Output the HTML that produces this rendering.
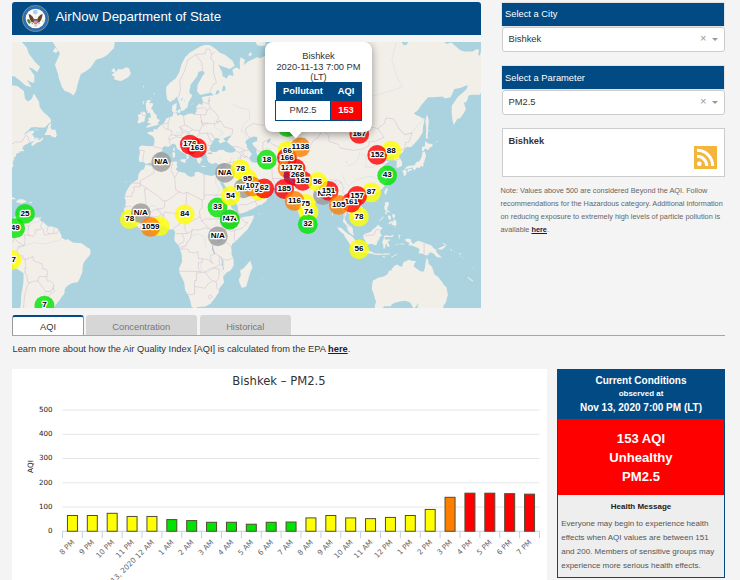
<!DOCTYPE html>
<html lang="en">
<head>
<meta charset="utf-8">
<title>AirNow Department of State</title>
<style>
*{box-sizing:border-box;margin:0;padding:0}
html,body{width:740px;height:580px;overflow:hidden}
body{background:#f4f4f4;font-family:"Liberation Sans",Arial,sans-serif;color:#333;position:relative}
.abs{position:absolute}
#hdr{left:12px;top:2px;width:469px;height:33px;background:#024a84;border-radius:3px 3px 0 0}
#hdr .ttl{position:absolute;left:43.5px;top:0;height:33px;line-height:29.5px;font-size:13.3px;color:#fff;white-space:nowrap}
#seal{position:absolute;left:10px;top:2.9px;width:27px;height:27px}
#map{left:12px;top:42px;width:469px;height:266px;background:#aad3df;overflow:hidden}
#map svg{position:absolute;left:0;top:0}
#pop{position:absolute;left:253px;top:-0.5px;width:107px;height:90px;background:#fff;border-radius:8px;box-shadow:0 2px 9px rgba(0,0,0,.4)}
#pop .tipc{position:absolute;left:17px;top:90px;width:28px;height:14px;overflow:hidden}
#pop .tip{position:absolute;left:8.3px;top:-6.5px;width:11.4px;height:11.4px;background:#fff;transform:rotate(45deg);box-shadow:0 2px 9px rgba(0,0,0,.4)}
#pop .pc{position:absolute;left:0;top:9.8px;width:107px;text-align:center;font-size:9.3px;line-height:10.3px;color:#333;background:#fff}
#pop table{position:absolute;left:10px;top:40.5px;width:87px;border-collapse:collapse;font-size:9.3px;background:#fff}
#pop th{background:#024a84;color:#fff;font-weight:bold;height:18.5px;padding:0 0 1px 0;text-align:center}
#pop td{border:1px solid #024a84;height:20px;padding:0 0 1.5px 0;text-align:center;color:#333}
#pop td.r{background:#ff0000;color:#fff;font-weight:bold}
.ph{left:501.7px;width:222.6px;height:23.1px;box-shadow:0 0 0 0.7px #ddd;background:#024a84;color:#fff;font-size:9.35px;line-height:21.5px;padding-left:3.3px;white-space:nowrap}
.sel{left:501.5px;width:223px;height:24.5px;background:#fff;border:1px solid #ccc;border-radius:3px;font-size:9.35px;line-height:22px;padding-left:6px;color:#333}
.sel .x{position:absolute;right:17px;top:-1px;font-size:11px;color:#999}
.sel .ar{position:absolute;right:6px;top:10px;width:0;height:0;border-left:3px solid transparent;border-right:3px solid transparent;border-top:3px solid #999}
#city{left:501.5px;top:128px;width:223px;height:48.5px;background:#fff;border:1px solid #ccc}
#city b{position:absolute;left:6px;top:5px;font-size:9.3px;line-height:14px;color:#333}
#rss{position:absolute;left:191px;top:16.5px;width:23px;height:23px}
#note{left:500.5px;top:184px;width:226px;font-size:7.34px;line-height:13px;color:#666;white-space:nowrap}
#note b{color:#1b1b3a;text-decoration:underline}
.tab{top:314.5px;height:21px;font-size:9.3px;line-height:24.5px;text-align:center;border-radius:3px 3px 0 0}
.tab.off{background:#d6d6d6;color:#777}
#t1{left:12px;width:72px;background:#fff;border:1px solid #999;border-top:2px solid #024a84;color:#333;line-height:20.6px;border-bottom:none}
#tline{left:12px;top:335px;width:712.8px;height:1px;background:#a6a6a6}
#learn{left:12.5px;top:343px;font-size:9.31px;line-height:12px;white-space:nowrap;color:#333}
#learn b{text-decoration:underline;color:#1b1b3a}
#chart{left:12px;top:369px;width:535px;height:211px;background:#fff;overflow:hidden}
#cc{left:557px;top:369px;width:168px;height:209px;background:#eee;border:1px solid #024a84;border-top:none}
#cc .top{position:absolute;left:-1px;top:0;width:168px;height:49.5px;background:#024a84;color:#fff;text-align:center;font-weight:bold}
#cc .red{position:absolute;left:0;top:49.5px;width:166px;height:76.5px;background:#ff0000;color:#fff;text-align:center;font-weight:bold;font-size:13.1px;line-height:18.9px;padding-top:11.5px}
#cc .hm{position:absolute;left:0;top:126px;width:166px;text-align:center;font-weight:bold;font-size:8px;line-height:12px;color:#222;padding-top:6px}
#cc .tx{position:absolute;left:3.2px;top:148.4px;font-size:8px;line-height:14px;color:#555;white-space:nowrap}
</style>
</head>
<body>
<div id="hdr" class="abs">
<svg id="seal" viewBox="0 0 27 27"><circle cx="13.5" cy="13.5" r="13.1" fill="#2f6db4" stroke="#c9c064" stroke-width="0.55"/><circle cx="13.5" cy="13.5" r="9.8" fill="#fbfbf8"/><circle cx="13.3" cy="7.1" r="2.4" fill="#a9d3e6"/><path d="M6.6 9.100 L8.600 9.700 L10.700 11.700 L11.900 14.100 L11.600 17 L9.800 17.300 L8.050 14.700 L7.200 12Z M20.650 9.100 L18.600 9.700 L16.500 11.700 L15.400 14.100 L15.700 17 L17.400 17.300 L19.200 14.700 L20.100 12Z M11.900 14.100 L15.400 14.100 L16 17.600 L13.600 19.400 L11.300 17.600Z" fill="#6a4423"/><path d="M9.6 18 L10.800 18.900 M17.600 18 L16.400 18.900" stroke="#6a4423" stroke-width="0.8"/><circle cx="13.6" cy="12.3" r="1.15" fill="#f4f2ea"/><ellipse cx="6.9" cy="16.3" rx="1.4" ry="2.5" transform="rotate(-30 6.900 16.300)" fill="#3f8c3f"/><path d="M19.8 15.400 L21.600 17.300 M20.600 15 L21.900 16.600" stroke="#b5b5b5" stroke-width="0.5"/><path d="M11.6 19.300 L15.700 19.300 L15.100 21.700 L12.150 21.700Z" fill="#d3d3d0"/><path d="M11.75 14.200 H15.500 V17 Q15.500 18.500 13.620 18.700 Q11.750 18.500 11.750 17Z" fill="#f28a8a"/><rect x="11.75" y="14.2" width="3.75" height="1.4" fill="#2c5fb3"/></svg>
<div class="ttl">AirNow Department of State</div>
</div>

<div id="map" class="abs">
<svg width="469" height="266" viewBox="0 0 469 266">
<rect width="469" height="266" fill="#aad3df"/>
<g filter="url(#bl)">
<path fill="#f2efe9" d="M133.5 123.0 L134.6 122.8 L140.9 124.6 L146.6 121.4 L150.4 120.7 L158.0 120.2 L163.3 119.5 L165.5 120.2 L164.6 122.5 L165.5 124.9 L163.7 127.2 L165.5 129.0 L168.4 129.9 L173.1 131.0 L175.0 133.3 L178.8 135.0 L182.6 133.9 L182.6 130.6 L186.4 129.7 L192.1 132.4 L199.7 134.1 L203.5 132.8 L205.9 133.5 L209.5 133.3 L210.9 137.2 L209.5 140.9 L207.6 139.2 L206.3 136.3 L206.7 138.3 L208.8 142.2 L212.0 148.9 L215.2 155.1 L215.4 159.1 L217.7 161.1 L219.6 166.0 L222.4 168.0 L225.7 171.3 L226.8 173.3 L226.6 174.0 L228.1 176.0 L233.8 174.6 L237.6 174.2 L242.0 173.3 L241.6 176.0 L239.5 180.6 L235.7 187.3 L231.9 191.1 L226.2 196.7 L223.4 199.6 L220.5 201.5 L219.0 205.3 L219.6 209.1 L219.6 212.9 L221.5 216.8 L221.7 223.6 L218.6 228.5 L214.7 230.5 L211.1 234.5 L212.0 240.6 L207.3 246.5 L206.9 250.1 L203.5 255.3 L198.7 261.5 L193.4 264.4 L186.4 264.9 L182.6 266.3 L179.6 265.1 L178.8 261.0 L176.9 254.4 L173.1 248.2 L172.2 240.4 L167.4 230.5 L167.1 226.5 L170.1 219.7 L169.7 212.6 L168.0 207.2 L167.1 204.3 L162.3 198.6 L162.5 195.0 L163.1 191.1 L162.7 188.4 L160.8 187.3 L158.0 187.6 L156.1 187.6 L153.2 183.8 L147.0 184.2 L144.3 185.4 L140.9 186.7 L137.1 185.9 L130.5 187.4 L127.6 186.3 L124.2 183.8 L121.0 181.5 L119.7 179.6 L118.7 177.7 L116.2 174.8 L113.0 172.1 L112.8 170.0 L111.5 167.6 L113.4 165.1 L113.8 159.1 L112.5 155.1 L114.3 149.5 L117.2 144.5 L120.0 141.1 L123.8 138.7 L126.1 137.2 L126.3 132.8 L128.6 128.8 L131.8 127.2Z M238.2 218.7 L240.5 225.6 L238.6 229.5 L234.2 244.6 L230.0 246.0 L227.6 241.3 L226.8 237.6 L228.9 233.5 L228.1 228.5 L231.9 226.0 L235.7 221.6Z M127.6 120.2 L126.7 116.1 L128.0 110.4 L127.1 105.3 L129.5 103.5 L135.2 104.0 L141.3 104.3 L142.4 100.8 L142.4 96.8 L140.5 94.0 L135.8 91.8 L135.6 90.3 L139.0 89.5 L141.7 89.8 L141.3 86.9 L144.9 87.5 L147.7 83.9 L151.3 81.8 L153.2 79.0 L154.2 76.2 L158.0 75.3 L160.8 74.0 L161.2 70.7 L160.0 68.4 L160.2 63.6 L164.6 61.1 L164.6 65.3 L163.7 68.7 L165.2 72.7 L165.5 73.7 L168.4 72.4 L171.6 74.0 L176.0 72.0 L179.8 71.4 L182.2 72.4 L184.5 69.7 L184.5 64.3 L187.4 61.5 L190.2 63.3 L191.0 59.0 L189.3 55.7 L192.1 54.6 L197.8 53.8 L202.0 53.1 L198.7 50.8 L192.1 52.0 L188.3 53.1 L185.1 49.6 L185.5 42.9 L191.1 33.0 L192.9 31.2 L190.6 28.5 L186.4 29.9 L185.1 34.3 L178.8 42.4 L177.3 48.9 L177.3 50.4 L180.3 53.5 L179.2 55.7 L176.2 60.8 L175.6 65.0 L171.8 68.4 L169.2 69.1 L168.8 66.7 L167.1 60.8 L165.5 56.4 L164.8 54.6 L162.7 57.2 L158.0 60.1 L155.1 57.2 L154.2 50.8 L154.2 44.9 L158.0 40.8 L163.7 36.5 L167.4 29.9 L169.3 22.8 L173.1 15.3 L177.9 10.5 L182.6 7.8 L188.3 4.4 L193.6 2.7 L197.8 3.3 L203.5 6.7 L207.3 10.5 L213.0 12.7 L220.5 18.8 L222.8 23.8 L217.7 27.1 L210.1 24.2 L206.3 22.8 L210.1 29.9 L210.7 34.3 L214.9 36.5 L216.7 33.0 L221.5 33.9 L220.5 27.6 L224.3 25.2 L228.1 27.6 L227.7 20.3 L228.5 15.3 L232.9 17.8 L231.9 23.3 L235.7 19.8 L245.2 15.3 L248.0 16.3 L254.7 13.2 L259.4 8.4 L266.1 11.1 L269.8 12.7 L274.6 16.3 L275.5 12.7 L271.7 9.4 L271.4 1.6 L272.7 -4.4 L281.2 -10.7 L282.2 -1.4 L284.1 12.7 L285.0 -1.4 L288.8 -5.6 L296.4 -10.7 L307.8 -17.4 L334.3 -40.2 L357.1 -32.1 L359.0 -16.0 L372.2 -12.0 L385.5 -10.7 L389.3 -0.2 L391.2 2.7 L394.1 3.3 L396.9 -0.8 L402.6 -2.0 L408.3 -1.4 L410.2 -7.5 L419.7 -7.5 L429.1 -2.0 L434.8 2.1 L439.2 0.4 L447.7 7.8 L451.9 9.4 L460.8 9.4 L464.2 7.2 L467.1 7.8 L466.1 12.7 L468.0 13.7 L469.0 8.4 L472.7 8.4 L478.4 12.7 L478.4 43.7 L470.9 48.9 L467.6 52.7 L459.5 52.7 L456.6 53.5 L454.4 60.1 L451.9 60.8 L453.8 67.0 L451.9 71.1 L448.1 76.2 L445.4 76.8 L441.8 83.0 L440.5 78.4 L439.6 70.4 L439.9 63.6 L442.4 60.1 L446.2 54.6 L450.9 50.8 L454.7 46.9 L455.7 42.9 L448.1 46.1 L442.4 46.9 L438.6 55.3 L432.9 56.4 L430.7 54.6 L421.5 55.3 L415.9 55.3 L410.2 61.9 L405.4 68.7 L401.6 71.4 L405.4 73.7 L407.3 74.3 L410.2 76.2 L412.6 76.5 L412.1 80.0 L411.1 84.5 L410.7 90.3 L407.3 96.0 L402.6 101.4 L398.8 105.3 L395.0 104.8 L392.5 107.1 L390.6 110.4 L387.4 112.9 L386.5 114.6 L388.2 116.6 L390.1 120.2 L390.1 123.7 L386.5 125.6 L384.4 126.0 L384.6 122.5 L384.8 119.0 L382.1 118.3 L382.3 114.1 L380.6 112.9 L376.0 115.4 L375.1 111.7 L376.0 111.2 L374.1 110.9 L371.3 113.4 L368.5 114.9 L367.9 116.6 L370.0 119.0 L371.3 119.9 L374.1 118.8 L377.0 119.2 L374.1 121.4 L372.8 122.5 L370.9 124.9 L372.8 127.2 L374.0 129.9 L375.8 132.4 L375.7 134.1 L374.0 135.5 L376.0 136.3 L375.1 139.8 L373.6 140.7 L371.9 144.7 L370.3 146.4 L368.8 147.9 L366.0 150.3 L361.4 152.0 L359.9 152.6 L356.1 154.0 L354.2 154.6 L353.7 156.5 L352.9 154.2 L350.4 153.6 L347.6 155.1 L345.3 158.5 L346.6 161.5 L348.5 163.7 L350.1 165.1 L351.8 169.0 L352.0 172.3 L351.4 173.8 L348.0 176.0 L347.0 177.7 L343.8 179.4 L343.4 177.1 L342.9 176.0 L341.0 175.6 L339.6 173.5 L338.5 172.5 L336.2 171.5 L336.0 170.2 L335.3 170.0 L334.3 170.3 L334.1 172.9 L332.8 175.8 L333.0 178.3 L334.3 179.6 L335.3 182.1 L337.5 183.3 L338.7 184.0 L340.8 186.7 L341.0 189.2 L340.8 190.9 L342.3 193.1 L341.0 193.3 L338.5 191.6 L336.8 190.1 L335.5 187.8 L334.9 185.5 L334.5 183.6 L333.8 182.7 L331.9 180.6 L331.1 180.6 L331.1 177.7 L331.7 175.8 L331.7 172.9 L330.9 169.0 L330.0 166.0 L329.8 164.1 L328.3 163.1 L325.8 165.5 L323.5 165.1 L323.9 162.1 L323.5 159.5 L322.0 157.5 L320.7 156.5 L319.1 154.0 L318.8 152.4 L316.3 152.0 L313.5 153.4 L311.6 153.6 L309.7 154.4 L309.5 155.7 L308.7 157.1 L306.4 157.7 L304.4 160.1 L302.7 161.7 L300.8 163.9 L298.7 165.3 L296.8 166.6 L296.6 170.0 L296.2 172.9 L296.0 176.0 L294.9 178.1 L293.0 178.9 L291.7 180.4 L289.8 178.7 L289.2 176.7 L287.3 172.9 L286.5 170.9 L285.2 167.4 L284.6 166.0 L283.7 163.1 L282.7 159.1 L282.6 155.1 L282.4 152.4 L281.4 154.6 L279.3 155.5 L277.4 155.1 L275.5 152.4 L277.4 151.2 L275.3 150.6 L274.0 149.5 L272.3 147.9 L270.8 146.0 L267.0 146.4 L262.8 146.4 L261.3 146.6 L256.6 146.0 L253.3 145.3 L252.8 143.2 L251.6 142.4 L248.4 143.4 L245.2 142.6 L242.3 140.7 L241.0 138.3 L239.5 135.9 L237.6 135.2 L236.7 136.1 L235.5 137.4 L236.7 139.4 L238.7 142.6 L239.9 143.7 L240.8 145.6 L241.4 146.8 L242.0 144.5 L242.5 146.2 L242.0 147.9 L244.2 148.5 L247.8 148.1 L249.6 146.2 L251.1 144.5 L251.6 146.8 L252.2 148.3 L255.8 149.7 L258.1 152.0 L256.2 155.7 L254.3 159.1 L251.5 161.3 L249.0 163.1 L247.3 163.1 L243.7 165.1 L241.4 166.6 L237.8 168.0 L233.8 170.0 L230.0 171.3 L227.2 171.5 L226.6 170.3 L226.0 167.4 L225.5 164.1 L224.0 161.1 L222.1 158.1 L219.0 154.0 L217.7 149.9 L215.2 146.8 L213.0 143.7 L211.1 140.5 L211.1 137.2 L209.7 133.3 L210.5 131.7 L211.1 129.4 L212.0 127.4 L212.8 124.9 L212.6 121.8 L213.3 121.1 L211.1 121.1 L209.2 121.8 L206.3 122.3 L203.5 120.7 L200.6 122.1 L198.2 120.9 L196.5 120.2 L194.9 117.1 L195.5 115.4 L194.4 114.1 L194.4 112.9 L194.0 111.4 L190.2 110.7 L189.3 112.4 L187.9 111.7 L187.7 114.1 L189.3 115.9 L190.2 117.8 L188.7 119.5 L188.3 121.4 L187.2 121.4 L185.8 120.7 L185.1 118.3 L184.7 116.8 L183.9 115.6 L183.0 114.1 L181.5 111.7 L181.7 108.4 L179.8 106.6 L175.8 104.0 L173.5 102.4 L172.2 99.5 L170.5 100.0 L170.7 98.1 L168.2 99.0 L168.2 102.2 L170.5 104.0 L171.6 106.6 L175.0 108.1 L175.0 109.4 L178.8 111.4 L179.8 112.7 L176.9 111.7 L176.2 113.7 L177.1 115.4 L176.0 116.8 L174.5 117.8 L174.7 115.6 L174.5 112.9 L171.8 110.9 L169.3 109.9 L167.8 108.4 L165.5 106.9 L164.6 105.3 L164.2 104.0 L163.3 102.4 L161.6 101.6 L158.9 103.2 L156.1 105.1 L153.8 104.3 L151.3 104.5 L150.4 106.6 L150.8 108.1 L148.9 109.4 L146.2 110.9 L144.1 114.1 L145.1 115.9 L143.4 118.3 L140.9 120.7 L136.3 120.9 L134.5 122.3 L132.7 121.1 L130.7 119.7Z M133.9 85.7 L138.1 85.1 L141.8 83.9 L147.3 82.4 L145.6 81.5 L147.9 78.1 L145.3 76.8 L144.7 74.9 L144.5 73.0 L141.8 70.4 L140.9 67.7 L139.0 67.0 L140.9 63.3 L141.3 61.5 L138.1 61.1 L137.1 61.5 L138.8 57.9 L135.2 57.9 L133.7 61.9 L134.1 65.3 L134.3 68.7 L135.6 67.7 L135.2 71.1 L138.1 70.7 L138.6 73.3 L139.0 75.6 L136.2 75.9 L136.7 77.5 L136.7 79.3 L134.8 80.6 L138.6 81.5 L138.8 82.4 L136.2 83.0Z M132.6 79.3 L132.9 75.9 L134.1 71.7 L132.4 69.7 L129.1 69.7 L128.4 72.0 L125.7 73.0 L126.7 75.9 L125.9 79.3 L125.3 80.6 L126.7 81.5 L129.0 80.6Z M101.6 37.0 L106.8 38.7 L109.2 39.1 L116.2 35.2 L118.9 32.1 L117.2 26.6 L114.0 25.2 L110.2 27.6 L106.2 27.1 L103.9 29.9 L102.0 25.7 L99.2 28.9 L103.0 30.8 L99.2 32.6 L103.0 35.2Z M39.4 -10.7 L40.4 -0.8 L42.3 2.7 L48.0 11.6 L42.9 22.8 L46.1 32.1 L46.7 35.7 L49.9 44.9 L52.7 48.9 L57.5 50.4 L61.4 53.5 L64.1 48.9 L66.0 40.8 L68.8 32.1 L73.4 29.4 L78.3 26.1 L84.0 17.8 L91.6 15.3 L95.4 12.7 L102.0 6.1 L103.0 -1.4 L103.0 -10.7Z M40.8 9.4 L43.2 5.6 L46.1 8.4 L44.2 11.1Z M9.1 -0.8 L14.8 5.6 L16.7 11.6 L23.3 20.3 L28.1 24.7 L25.2 29.9 L20.5 26.6 L16.7 25.2 L22.4 33.5 L22.2 40.8 L18.6 39.9 L14.8 37.8 L19.5 44.9 L13.8 43.7 L8.2 38.7 L2.5 34.3 L-7.0 34.3 L-7.0 -10.7 L9.1 -10.7Z M-7.0 42.9 L-2.3 42.9 L5.3 44.1 L11.9 48.9 L12.9 56.4 L15.7 59.4 L19.5 57.2 L22.0 51.6 L27.1 60.1 L27.7 65.3 L31.9 70.4 L35.7 73.7 L38.5 76.8 L39.1 80.0 L36.6 81.8 L32.8 85.4 L27.5 85.4 L23.3 85.1 L18.8 85.4 L16.7 88.0 L13.8 90.3 L11.0 94.0 L12.9 92.3 L17.6 88.9 L22.4 88.6 L21.4 91.8 L19.5 91.8 L21.6 94.0 L22.4 96.8 L25.2 97.6 L28.1 98.1 L30.5 95.1 L30.9 97.3 L29.0 99.2 L24.3 101.1 L20.5 104.0 L19.3 103.2 L19.5 101.4 L22.4 99.2 L19.5 99.8 L17.6 100.6 L14.8 101.9 L11.9 103.5 L10.6 106.1 L10.2 107.1 L11.9 108.1 L11.9 108.9 L9.5 109.2 L6.3 109.9 L8.2 110.4 L4.4 111.4 L4.0 114.1 L2.5 115.6 L1.5 114.6 L2.3 116.6 L1.1 119.7 L0.6 120.4 L1.5 124.4 L-0.4 125.6 L-7.0 129.4 L-7.0 42.9Z M22.8 95.4 L27.1 96.2 L26.2 97.3 L23.3 96.8Z M22.6 86.6 L27.7 88.6 L24.3 88.0Z M32.2 92.9 L34.7 88.9 L36.6 83.0 L39.4 81.2 L38.5 86.0 L40.4 88.0 L43.2 87.5 L44.2 90.3 L44.8 93.2 L43.8 95.4 L39.4 94.6 L38.5 92.9Z M3.6 160.3 L6.6 157.3 L11.9 157.5 L15.0 159.9 L11.9 160.5 L9.1 161.7 L7.2 160.7Z M-7.0 152.0 L-1.3 153.8 L1.5 155.7 L4.0 156.7 L2.5 157.3 L-2.3 157.3 L-1.3 155.9 L-7.0 153.8Z M-3.8 160.3 L0.0 160.7 L0.0 161.3 L-2.3 161.5Z M17.3 160.1 L20.3 160.3 L19.9 161.1 L17.3 161.1Z M27.3 175.4 L29.2 175.2 L29.0 176.5 L27.3 176.5Z M-7.0 179.6 L-0.9 180.6 L0.6 178.1 L1.5 176.0 L2.8 174.8 L4.0 174.4 L8.7 172.1 L9.5 173.3 L8.3 174.4 L8.9 175.6 L9.7 175.2 L11.6 173.8 L11.9 172.5 L12.7 173.8 L15.2 175.2 L17.6 175.6 L21.4 176.5 L23.3 175.6 L27.1 175.4 L27.3 176.7 L29.4 179.6 L31.3 180.0 L34.3 182.9 L36.6 184.6 L40.0 184.6 L42.3 185.0 L45.5 186.5 L46.8 187.8 L48.9 192.4 L49.9 194.9 L48.9 195.8 L52.7 197.1 L52.7 198.5 L55.6 197.1 L60.7 200.5 L65.0 201.1 L68.8 201.1 L71.7 202.8 L74.5 204.9 L77.9 206.8 L78.7 209.5 L78.5 211.2 L77.0 214.3 L74.5 216.8 L71.7 220.7 L70.7 224.6 L70.4 230.1 L68.8 234.1 L68.3 235.1 L66.9 238.6 L65.0 240.6 L62.8 240.6 L59.9 241.3 L56.9 242.7 L53.7 245.4 L52.5 247.9 L52.7 250.3 L51.8 252.4 L49.9 254.4 L48.0 257.7 L45.9 260.1 L43.4 263.7 L40.6 266.5 L37.5 266.5 L34.7 264.9 L33.9 265.8 L36.2 269.1 L36.6 273.8 L6.3 273.8 L8.2 265.8 L8.9 262.2 L9.1 255.5 L9.5 251.1 L10.4 246.9 L11.2 241.9 L11.6 234.9 L11.4 231.5 L9.5 229.7 L6.8 227.9 L2.1 225.2 L0.2 222.0 L-1.3 218.7 L-7.0 214.9Z M412.8 109.4 L413.8 112.9 L414.0 114.1 L413.0 117.1 L412.1 120.2 L411.3 121.8 L411.7 123.2 L410.2 124.9 L409.6 123.7 L408.5 124.6 L407.9 125.8 L406.8 125.8 L404.5 125.8 L404.3 124.9 L404.1 126.5 L402.6 128.3 L400.9 126.7 L401.1 125.6 L398.8 125.8 L396.9 126.5 L395.8 126.5 L393.1 127.2 L393.1 126.3 L395.0 124.4 L397.3 123.7 L399.7 123.5 L402.6 123.2 L403.9 120.7 L405.1 119.0 L404.5 120.2 L407.3 119.2 L408.3 117.8 L409.8 114.6 L410.2 112.9 L410.2 111.4 L410.7 109.9Z M410.2 109.2 L409.8 106.3 L410.7 104.5 L412.8 104.5 L413.4 99.0 L415.9 101.4 L420.2 101.9 L420.6 104.5 L417.8 105.6 L416.4 107.9 L413.0 106.6 L411.9 107.9 L412.4 108.4Z M392.9 127.4 L394.4 129.0 L394.8 130.6 L393.9 133.0 L392.5 133.9 L391.6 133.3 L391.6 131.2 L390.6 130.1 L390.6 128.8 L392.0 128.1Z M395.9 127.2 L399.9 126.7 L400.1 127.6 L399.2 128.8 L397.8 128.3 L396.9 130.1 L395.8 129.4 L395.2 128.5Z M414.0 97.6 L415.1 95.4 L416.6 97.3 L415.5 93.7 L416.2 88.3 L419.1 89.2 L415.9 87.5 L416.4 83.0 L416.8 78.4 L415.9 75.3 L415.3 72.4 L414.0 75.3 L413.4 80.0 L414.2 84.5 L414.2 88.9 L414.0 91.8 L413.8 94.6Z M374.1 146.2 L376.0 146.8 L375.1 148.9 L373.8 153.0 L372.6 151.4 L372.4 149.7 L373.6 147.6Z M350.8 158.5 L353.3 156.9 L355.2 157.9 L353.3 160.3 L350.8 160.1Z M373.4 160.1 L376.4 160.1 L376.8 163.1 L375.3 165.5 L375.3 168.4 L377.4 169.2 L380.0 171.7 L378.7 170.5 L377.0 170.0 L374.1 169.8 L373.4 168.2 L372.6 167.4 L372.1 164.5 L373.0 163.7 L373.0 162.1Z M376.0 182.5 L377.9 179.6 L380.8 179.4 L382.7 177.1 L384.2 179.6 L384.6 182.5 L383.6 183.8 L382.5 185.2 L382.1 182.9 L379.8 182.9 L379.8 181.3 L378.5 181.5Z M380.4 171.9 L382.7 172.3 L383.2 174.8 L381.7 176.7 L380.8 175.2 L380.4 173.7Z M376.0 173.3 L377.9 173.8 L379.1 175.2 L378.5 178.1 L377.0 177.5 L376.0 175.8Z M366.9 180.0 L371.3 175.8 L371.7 174.2 L370.3 175.2 L367.5 178.7Z M372.8 170.2 L375.1 170.5 L374.9 172.3 L373.8 172.3Z M325.4 185.2 L329.6 185.9 L331.9 188.6 L335.3 191.6 L337.2 192.6 L340.0 194.3 L341.5 195.8 L342.9 197.9 L343.4 200.2 L345.7 201.5 L345.3 203.8 L345.3 206.8 L344.2 206.8 L342.9 206.4 L338.7 203.4 L334.9 197.7 L332.4 193.9 L332.0 192.6 L328.6 189.7 L325.8 186.7Z M344.2 208.7 L345.7 207.0 L347.2 207.4 L350.1 207.8 L351.0 208.7 L354.0 208.9 L355.2 208.0 L358.2 208.9 L358.6 209.5 L361.6 210.4 L361.8 212.4 L359.0 211.6 L355.2 211.4 L351.4 210.4 L349.5 210.6 L346.6 209.9Z M361.8 211.2 L364.7 211.4 L366.6 211.6 L370.3 211.8 L372.2 211.6 L377.6 211.4 L377.6 212.6 L372.2 212.7 L370.3 212.6 L366.6 213.1 L364.7 212.7 L361.8 212.4Z M378.9 215.4 L380.8 213.5 L386.1 211.8 L384.6 212.9 L381.7 214.3 L379.8 215.4Z M370.3 213.7 L373.8 214.9 L372.2 215.4 L370.3 214.5Z M351.4 193.0 L352.5 192.0 L355.7 191.1 L359.0 189.7 L360.9 187.3 L363.7 185.4 L366.0 182.5 L367.9 184.4 L370.7 185.9 L369.0 187.4 L368.1 189.2 L368.5 191.6 L370.3 193.9 L368.1 194.3 L367.5 196.7 L365.6 199.2 L364.7 202.6 L362.0 203.4 L361.8 202.3 L359.0 201.9 L356.5 202.4 L353.7 201.3 L353.3 198.6 L351.8 196.7 L351.4 194.3Z M371.9 194.3 L373.8 193.3 L377.9 194.1 L381.3 193.0 L382.1 193.1 L380.4 195.0 L378.3 194.9 L375.1 194.9 L372.6 195.0 L372.8 197.5 L375.1 197.5 L378.5 197.5 L377.6 198.8 L375.5 199.4 L376.6 201.5 L377.7 204.2 L376.0 204.9 L375.1 203.8 L374.1 201.1 L373.0 204.9 L373.0 206.4 L371.3 206.4 L371.3 202.4 L370.0 201.1 L370.9 198.6 L371.7 196.2Z M386.5 192.2 L387.4 193.0 L388.7 193.0 L387.4 194.9 L388.0 197.3 L387.0 196.4 L386.5 193.9Z M387.4 201.5 L392.7 201.7 L392.2 202.6 L387.4 202.3Z M383.6 201.9 L385.9 202.1 L385.1 203.0 L383.6 202.6Z M393.1 197.3 L395.9 196.6 L398.8 197.3 L399.7 200.5 L401.6 202.1 L403.5 200.0 L406.4 198.8 L412.1 200.7 L415.9 202.3 L418.7 203.0 L421.2 205.7 L423.4 207.2 L425.0 208.5 L423.4 208.7 L425.3 211.0 L428.2 213.9 L430.1 216.0 L428.8 215.6 L425.3 215.2 L423.8 213.9 L421.5 211.4 L418.7 210.3 L416.8 211.6 L415.9 213.3 L413.0 213.3 L410.2 211.4 L407.3 211.6 L406.4 209.7 L407.9 208.3 L406.4 206.2 L402.6 204.5 L398.8 203.2 L396.9 203.6 L396.5 202.1 L398.2 201.1 L395.6 200.2 L393.1 198.5Z M425.9 206.4 L429.1 205.3 L432.0 203.8 L433.5 203.8 L432.9 205.3 L430.1 207.6 L427.2 207.6Z M430.7 200.7 L433.9 202.6 L434.8 204.5 L433.5 203.4 L430.5 201.3Z M437.9 206.2 L439.6 207.6 L440.3 208.9 L439.0 208.3Z M441.5 208.5 L443.4 209.7 L442.8 210.1Z M446.2 211.0 L449.6 211.8 L449.0 212.4 L446.6 211.6Z M447.3 213.5 L449.6 214.5 L448.7 214.7Z M450.4 215.2 L452.5 216.4 L451.5 216.2Z M455.7 234.7 L461.4 239.0 L460.4 239.4 L455.7 235.7Z M460.6 224.6 L461.7 225.8 L461.0 226.0Z M461.9 226.7 L462.9 227.5 L462.1 227.7Z M463.6 229.7 L464.4 230.1 L463.6 230.3Z M363.0 269.1 L362.8 263.5 L364.1 259.9 L362.8 256.1 L362.0 252.9 L360.9 249.6 L359.7 246.9 L360.1 243.7 L360.5 240.6 L361.1 238.2 L362.8 237.8 L366.0 235.7 L369.6 235.1 L372.2 234.3 L375.1 232.5 L376.4 230.5 L377.6 227.9 L379.1 229.1 L379.8 227.1 L381.7 224.6 L384.6 222.6 L386.5 223.0 L387.8 224.4 L390.3 224.4 L390.8 221.6 L392.7 219.5 L395.0 219.1 L396.1 217.6 L397.8 218.3 L400.7 219.1 L404.1 219.1 L402.6 221.6 L401.6 224.2 L404.1 226.3 L406.4 227.9 L409.2 229.5 L411.7 229.5 L413.0 225.6 L413.4 221.6 L413.8 219.9 L414.3 216.8 L414.9 216.2 L416.2 218.3 L416.8 222.2 L418.7 223.2 L420.2 225.6 L421.2 228.3 L421.9 231.5 L423.1 233.1 L425.7 234.5 L427.6 236.7 L430.7 241.0 L431.6 242.5 L434.6 245.4 L435.0 249.0 L436.0 252.4 L434.8 256.6 L433.9 260.4 L432.5 261.9 L431.4 264.2 L430.8 269.1 L408.3 269.1 L407.3 266.5 L406.4 264.9 L405.6 266.7 L405.4 264.4 L406.2 262.2 L406.0 261.0 L404.5 263.7 L402.6 265.8 L402.0 266.7 L401.1 265.8 L399.2 262.2 L398.0 260.4 L393.3 258.8 L389.3 259.2 L383.6 260.6 L379.8 262.2 L378.9 264.2 L375.8 264.2 L372.2 264.2 L371.3 265.3 L369.4 269.1Z M296.0 177.3 L298.7 179.4 L300.0 181.9 L299.6 183.4 L297.5 184.6 L296.4 184.2 L296.0 182.5 L296.0 180.0Z M205.9 124.9 L207.3 124.2 L210.3 123.2 L209.2 124.9 L207.3 125.8 L206.1 125.6Z M189.3 123.5 L192.1 123.9 L194.6 124.4 L192.1 125.1 L189.3 124.4Z M168.2 117.8 L169.9 117.3 L174.3 117.1 L173.3 120.2 L173.3 120.9 L171.8 120.7 L168.4 118.8Z M160.2 110.4 L162.1 109.9 L163.3 111.7 L162.9 114.9 L161.8 115.4 L160.6 115.4 L160.6 111.7Z M162.5 105.3 L162.7 107.9 L162.1 109.4 L161.0 107.9 L161.2 106.3Z M149.2 113.9 L150.8 113.2 L151.1 113.9 L150.4 114.6Z M165.5 68.1 L168.4 67.0 L168.6 69.7 L167.1 71.4 L165.5 69.7Z M163.3 68.7 L165.0 68.7 L165.0 70.1 L163.7 70.1Z M179.2 63.6 L180.7 60.4 L180.3 62.6Z M242.3 -2.6 L245.2 3.3 L249.9 3.9 L253.7 3.3 L252.8 -10.7 L243.3 -10.7Z M236.3 12.7 L238.6 10.0 L240.1 12.7 L237.6 14.2Z M245.8 171.7 L248.0 171.7 L247.5 172.3 L246.0 172.1Z M219.0 206.8 L219.6 207.2 L219.4 208.0Z M249.6 236.3 L250.5 236.5 L250.1 237.2Z M253.5 234.7 L254.3 234.9 L253.7 235.5Z M130.8 43.7 L132.2 44.1 L131.6 45.7Z M141.8 50.4 L142.8 51.6 L142.0 53.1Z M138.4 56.1 L139.6 56.4 L139.0 57.2Z M131.0 59.4 L132.7 58.6 L131.6 61.5 L130.7 62.9Z M112.6 139.6 L114.0 139.4 L113.2 140.5Z M114.7 140.2 L115.5 140.5 L115.1 140.9Z M117.6 139.4 L118.5 138.9 L119.1 137.9 L118.3 140.0Z M99.6 166.6 L100.3 166.8 L99.9 167.2Z M320.5 170.0 L321.0 170.3 L320.9 173.7 L320.1 173.5Z M420.6 103.0 L421.9 101.6 L421.4 101.4Z M423.4 100.6 L426.9 98.7 L424.4 99.2Z M439.0 85.7 L440.7 83.6 L439.8 85.1Z M454.4 58.3 L456.3 55.7 L455.3 57.9Z"/>
<path fill="#aad3df" d="M199.9 109.9 L197.8 108.1 L197.4 106.3 L198.4 104.3 L199.1 102.2 L201.0 99.5 L202.9 96.0 L205.4 96.2 L208.2 97.1 L206.3 99.0 L208.2 101.4 L211.6 100.0 L213.9 99.5 L211.1 96.8 L214.5 95.1 L217.7 94.0 L219.2 94.6 L216.7 96.8 L215.8 98.7 L214.5 99.2 L215.4 100.0 L216.7 101.6 L220.0 104.0 L223.4 106.9 L223.6 108.9 L220.5 110.4 L217.7 110.7 L213.9 109.7 L211.2 107.8 L207.3 107.9 L204.0 109.9Z M195.5 111.7 L196.8 110.4 L199.7 110.4 L200.6 111.2 L199.3 111.9 L196.8 111.9Z M233.8 98.7 L237.6 96.0 L241.4 94.6 L245.2 95.1 L245.2 99.2 L242.0 100.0 L240.1 101.4 L242.3 104.8 L244.8 106.6 L244.2 109.2 L245.2 112.9 L247.1 115.4 L246.7 120.2 L243.3 120.7 L240.5 120.2 L238.6 119.0 L237.4 116.6 L238.4 114.1 L240.1 112.2 L238.6 110.4 L236.7 107.9 L234.8 105.3 L234.8 102.7 L233.4 100.8Z M203.3 52.7 L204.4 48.9 L206.9 47.7 L207.3 50.8 L205.4 52.3Z M210.1 48.9 L211.1 43.7 L213.0 44.1 L213.5 47.7 L212.0 49.3Z"/>
<path fill="#aad3df" d="M205.0 196.6 L206.3 195.2 L209.2 195.4 L209.2 197.7 L208.8 200.5 L205.4 200.9 L204.8 198.1Z M200.1 202.3 L201.0 204.9 L203.1 211.6 L202.3 212.4 L200.1 207.2Z M209.2 213.9 L210.3 216.8 L211.1 223.2 L209.9 223.2 L209.5 217.8Z M170.1 169.8 L172.4 170.0 L171.8 171.5 L170.3 171.3Z M341.9 81.5 L345.7 80.0 L350.4 75.3 L352.9 68.4 L351.4 68.4 L348.5 75.3 L343.8 79.0Z M284.3 99.5 L286.0 95.7 L290.7 95.7 L294.5 96.0 L293.5 97.3 L287.9 96.8 L286.0 100.3Z M255.2 101.1 L255.6 97.9 L257.7 96.5 L259.0 97.3 L257.1 100.0 L256.4 101.6Z M289.2 107.1 L293.2 105.8 L292.2 107.4Z M212.4 122.5 L214.1 121.8 L213.5 123.2Z M333.6 119.7 L335.6 120.2 L334.7 121.1Z M168.2 58.3 L171.2 55.3 L169.7 58.6Z M171.8 60.8 L172.8 57.9 L172.2 57.9Z M196.3 60.1 L197.0 56.4 L197.8 59.0Z M12.9 225.6 L13.8 227.3 L12.3 226.5Z M8.3 178.3 L9.7 175.4 L8.9 175.0 L10.1 177.5Z M225.3 116.6 L227.2 115.4 L227.2 116.8Z M230.0 117.8 L231.5 119.7 L230.6 119.7Z M229.6 111.4 L231.2 112.4 L230.4 112.7Z M207.3 115.4 L208.6 116.3 L207.8 116.6Z"/>
<path fill="none" stroke="#aad3df" stroke-width="0.6" stroke-opacity="0.45" stroke-linejoin="round" d="M203.9 135.0 L203.9 142.6 L206.7 145.3 L207.1 148.9 L204.4 153.0 L202.5 158.1 L207.3 160.1 L209.0 161.7 L206.3 165.8 L207.3 170.9 L206.3 176.7 L203.5 182.5 L204.6 186.7 L204.4 191.4 L207.3 195.0 M206.3 165.8 L210.1 171.9 L213.0 173.8 L215.4 172.9 M48.9 196.7 L46.1 198.6 L40.4 200.0 L34.7 201.9 L30.9 201.7 L21.4 200.5 L11.9 203.8 L5.3 204.3 M168.2 207.2 L173.7 204.0 L175.4 200.0 L178.4 196.7 L180.7 193.0 L186.4 192.0 L192.5 194.9 L193.0 199.6 L194.0 205.3 M156.1 187.3 L157.4 181.0 L153.2 175.8 L150.9 172.9 L147.5 168.0 L142.8 163.7 L139.0 163.7 L136.2 168.0 L129.5 171.9 M235.3 97.3 L231.9 90.3 L229.1 89.8 L231.9 81.5 L237.6 76.8 L237.6 67.7 L228.1 66.0 L220.5 61.9 M284.1 25.2 L275.5 27.6 L268.9 32.1 L275.5 48.9 L283.1 48.9 L289.8 54.6 L302.1 70.4 L305.9 78.4 M301.1 4.4 L307.8 17.8 L310.6 28.5 L315.4 46.9 L320.7 67.0 L318.2 73.7 L322.9 80.9 M385.5 -4.4 L379.8 17.8 L385.5 36.5 L390.6 44.9 L372.2 50.8 L359.0 54.6 L349.5 63.6 L345.7 73.7 M412.6 76.5 L404.5 84.5 L400.7 90.6 L393.1 92.6 L386.5 86.0 M375.8 133.0 L370.0 131.7 L364.7 136.8 L361.4 134.8 L355.7 134.6 L346.6 137.2 L343.0 138.7 L336.2 143.7 L333.4 140.5 L330.5 132.8 M369.4 118.5 L361.8 124.9 L353.9 125.8 L354.2 114.1 L347.6 110.9 L345.7 117.8 L341.5 122.5 L334.3 123.7 M311.6 153.0 L311.6 146.8 L302.1 145.8 L296.4 143.7 L292.6 136.1 M316.3 152.0 L314.8 145.8 L319.1 144.3 L324.8 140.9 L322.9 137.6 L311.6 137.6 L300.2 135.0 M273.1 148.9 L274.6 144.7 L277.4 139.4 L279.7 131.7 L282.2 127.2 L286.9 123.7 M346.6 176.7 L343.8 172.9 L345.7 169.0 L343.2 162.3 L338.1 161.1 L336.2 162.1 L334.3 156.5 L335.8 153.0 M235.7 135.0 L231.9 130.6 L228.9 128.8 L226.2 126.0 L221.1 124.9 L217.7 120.7 L219.6 115.9 M234.6 133.9 L231.9 133.3 L228.7 130.6 L224.9 124.9 L222.1 119.0 M200.8 99.2 L197.8 99.5 L195.9 102.7 L187.7 101.4 L183.6 100.6 L180.7 97.9 L180.7 92.3 L176.9 91.8 L170.3 90.1 L163.7 90.6 M206.3 95.7 L208.2 93.2 L211.1 92.3 L210.1 88.9 L204.4 86.6 L202.5 84.5 L202.7 78.4 M33.9 264.4 L33.8 259.9 L30.9 258.8 L32.8 252.2 L33.6 249.4 L38.5 249.6 L41.2 246.0 L42.3 242.7 M29.4 179.2 L25.2 180.0 L19.5 181.0 L16.7 184.0 L16.1 188.2 M212.0 231.7 L209.2 228.5 L207.1 226.0 L202.3 225.8 L199.5 227.5 L195.9 230.3 L192.7 230.1 L189.3 226.5 L188.3 222.6"/>
<path fill="none" stroke="#c8a8c8" stroke-width="0.75" stroke-opacity="0.5" stroke-linejoin="round" d="M237.6 96.0 L233.8 90.3 L233.8 86.0 L241.4 81.5 L249.0 83.0 L256.6 83.0 L261.3 75.3 L269.8 71.4 L279.3 73.0 L285.0 74.9 L290.7 75.3 L296.4 83.0 L302.1 83.0 L306.8 87.2 L310.2 88.6 M310.2 88.6 L319.1 83.9 L330.5 80.0 L338.1 82.1 L347.6 86.0 L360.9 85.4 L366.0 86.6 M311.2 88.6 L316.3 93.2 L317.3 99.5 L325.8 102.2 L328.6 106.1 L341.9 108.4 L351.4 106.9 L357.1 103.7 L356.9 100.0 L363.7 99.0 L372.1 95.4 L366.0 86.6 M366.0 86.6 L372.2 81.5 L374.1 75.9 L381.7 76.8 L386.5 86.0 L392.7 92.6 L400.1 90.9 L396.9 100.0 L393.5 100.6 L392.5 106.9 M310.2 88.6 L306.8 94.6 L301.1 99.2 L297.0 105.8 L292.6 109.2 L288.8 111.9 L284.4 114.1 L286.9 119.7 M286.9 119.7 L292.6 123.7 L295.4 130.6 L298.3 135.7 L307.8 140.5 L313.1 140.9 L319.1 140.9 L324.8 137.9 L329.2 140.0 M298.3 135.7 L296.8 138.7 L304.0 141.7 L311.8 143.9 L313.1 140.9 M329.2 140.0 L331.9 146.8 L330.0 148.9 L332.8 153.0 L336.6 154.2 L338.5 152.0 L343.8 150.6 L346.8 152.0 L349.5 154.0 M274.0 149.5 L279.3 147.9 L277.4 141.5 L283.1 136.1 L286.0 133.9 L285.0 127.2 L290.7 123.7 M311.6 153.6 L311.9 145.1 L315.0 144.7 L319.5 146.8 L319.7 151.0 L318.2 151.0 L319.7 154.4 M329.2 140.0 L324.8 143.7 L321.6 148.9 L320.3 154.0 M261.3 146.6 L263.8 142.2 L260.4 136.6 L269.8 136.6 L276.1 131.9 L277.4 127.2 L280.3 121.4 L286.0 120.2 M260.4 136.6 L260.0 129.4 L260.7 123.5 L254.7 118.5 L247.1 119.0 M236.7 136.1 L235.1 131.7 L231.0 126.0 L231.9 123.0 L229.6 119.7 L228.1 114.4 M213.3 122.5 L216.7 120.7 L224.9 119.7 L229.6 119.7 M235.5 137.4 L232.9 138.1 L229.5 137.9 L221.3 131.9 L218.6 131.5 L214.9 132.8 L214.5 136.3 L211.1 137.2 M224.9 119.7 L222.4 126.3 L218.6 131.5 M218.6 131.5 L214.5 131.0 L212.8 130.1 L212.2 128.8 L214.1 126.7 L213.0 122.8 M225.9 164.3 L228.1 162.3 L233.8 163.1 L243.3 159.1 L249.0 157.1 L250.1 153.0 L249.4 151.6 L244.2 148.5 M243.3 159.1 L245.4 163.9 M249.4 151.6 L250.9 148.7 L251.5 147.0 M244.2 108.6 L250.9 109.7 L250.9 100.0 L255.8 98.4 L260.4 101.9 L269.8 106.9 L273.6 110.4 L279.3 107.1 L284.1 106.9 L297.0 105.8 M250.9 109.7 L255.6 106.1 L260.4 109.9 L263.2 112.9 L270.8 119.2 M260.7 123.5 L267.0 121.8 L270.8 119.2 L273.6 120.2 L277.4 118.8 L280.3 120.9 L286.7 119.7 M273.6 110.4 L278.4 112.4 L284.4 114.1 M279.3 107.1 L278.4 110.4 L283.1 111.7 M128.0 108.1 L132.4 108.6 L131.4 113.7 L130.7 119.7 M141.3 104.3 L150.8 106.9 M149.4 82.7 L152.7 86.0 L156.1 87.5 L160.2 88.9 L159.1 92.9 L156.1 96.8 L158.0 97.6 L157.2 99.8 L158.9 103.2 M171.6 74.0 L172.6 83.0 L167.6 85.1 L170.9 90.1 L169.3 93.2 L162.9 93.2 L159.1 92.9 M158.0 75.9 L156.1 80.6 L156.1 83.6 L156.1 87.5 M151.1 81.8 L153.8 81.8 L156.1 80.6 M161.2 70.7 L163.5 71.1 M182.2 72.4 L188.3 72.7 L189.4 78.1 L190.2 83.6 L187.7 88.6 L180.7 87.7 L176.7 90.1 L173.1 88.9 L167.6 85.1 M172.6 83.0 L176.7 84.8 L180.7 87.7 M158.0 97.6 L164.6 94.9 L170.7 96.0 L175.4 94.9 L176.7 90.1 M170.7 96.0 L170.7 98.1 M162.9 93.2 L164.6 94.9 M175.4 94.9 L180.7 97.6 L183.2 96.8 L187.7 92.1 L187.7 88.6 M170.5 98.7 L173.7 98.7 L176.0 96.0 M174.7 99.5 L180.7 100.0 L181.5 107.9 M180.7 97.6 L180.7 100.3 L181.5 104.0 L179.8 106.6 M183.2 96.8 L187.7 101.4 L187.2 107.1 L183.8 110.4 L184.5 112.9 M181.5 107.9 L183.8 110.4 M190.2 83.6 L195.9 81.2 L202.5 82.1 L208.8 79.0 L212.0 84.8 L220.5 87.2 L220.2 92.3 L217.1 94.3 M198.2 66.4 L203.5 70.4 L206.7 75.6 L204.4 79.7 L208.8 79.0 M189.4 78.1 L190.0 81.2 L195.9 81.2 M188.3 72.7 L193.6 73.0 L195.1 68.1 M184.5 66.7 L192.1 65.7 L195.1 68.1 L198.2 66.4 M190.8 60.4 L196.8 61.5 L198.2 66.4 M196.8 61.5 L197.4 55.0 M197.4 50.8 L201.6 42.0 L204.4 40.8 L201.4 29.9 L201.6 19.3 L198.7 16.8 L199.5 12.7 L203.3 9.4 M165.9 56.4 L168.4 48.9 L167.8 38.7 L172.2 29.9 L176.0 17.8 L183.6 12.7 M190.6 28.5 L189.6 20.3 L183.6 12.7 M183.6 12.7 L193.4 11.6 L194.0 7.2 L197.8 7.2 L199.7 12.7 M187.7 102.2 L193.0 103.5 L198.9 103.5 M188.1 91.8 L195.1 90.9 L198.2 98.7 L201.0 99.5 M195.1 90.9 L200.1 92.1 L201.8 96.2 M187.2 107.1 L192.1 109.7 L194.0 110.9 L194.8 108.6 L197.8 107.9 M183.8 110.4 L184.5 110.7 L188.1 109.7 L192.1 109.7 M223.4 109.2 L227.2 110.2 L229.6 113.7 L228.1 114.4 M220.5 104.3 L226.2 104.8 L232.9 108.4 L236.7 108.1 M227.2 110.2 L230.0 109.7 L232.9 108.4 M230.0 109.7 L232.9 114.1 L237.4 116.6 M229.6 113.7 L232.9 115.6 L235.7 113.7 M140.5 124.6 L142.4 130.6 L137.5 133.5 L128.2 138.9 L128.2 141.1 M128.2 141.1 L120.0 141.1 M128.2 141.1 L128.2 144.7 L121.9 144.7 L121.9 150.1 L120.0 151.0 L120.0 154.4 L112.5 154.4 M128.2 142.0 L135.6 146.8 L147.0 154.9 L150.9 159.1 L152.7 158.9 M135.6 146.8 L132.4 146.8 L134.3 164.1 L134.3 166.0 L122.9 165.8 L121.6 167.4 M152.7 158.9 L156.1 158.1 L167.4 149.9 M167.4 149.9 L163.7 147.9 L162.7 135.7 L160.4 130.6 L158.9 127.6 L161.0 120.4 M162.7 135.7 L166.5 129.0 M192.1 132.4 L192.1 153.0 L192.1 157.1 L190.2 158.1 L190.2 165.6 M192.1 153.0 L214.7 153.0 M190.2 158.1 L174.8 150.1 L171.6 151.8 L167.4 149.9 M174.8 150.1 L174.1 163.3 L170.3 168.2 L170.5 169.6 M170.5 169.6 L161.8 171.3 L152.3 170.0 L151.5 173.5 M152.7 158.9 L152.7 163.5 L151.3 166.2 L145.1 167.0 M145.1 167.0 L140.9 168.6 L136.5 170.5 L134.3 176.0 M170.5 169.6 L171.6 172.1 L169.9 176.7 L167.1 182.5 L161.0 186.7 M145.1 167.0 L149.1 172.3 M190.2 165.6 L187.4 169.0 L188.1 174.8 L189.6 179.2 M188.1 174.8 L180.7 178.7 L174.1 181.5 M174.1 181.5 L172.2 184.4 L175.0 191.6 L169.9 191.6 L166.1 191.6 L163.3 191.4 M171.6 172.1 L173.1 176.7 L170.9 177.5 L174.1 181.5 M175.0 191.6 L180.0 189.2 L180.0 187.6 L187.4 188.0 L192.7 185.9 L196.6 186.3 L203.3 189.2 M189.6 179.2 L194.0 176.7 L199.7 177.3 L207.3 176.7 L209.0 177.7 L209.2 179.6 M189.6 179.2 L192.7 181.5 L196.6 186.3 M213.7 168.2 L213.9 171.9 L209.4 175.8 L209.2 179.6 L207.3 181.0 L211.1 185.5 L213.0 187.4 M213.0 187.4 L219.6 189.3 L222.4 188.4 L224.3 187.8 M224.3 187.8 L230.0 186.3 L235.7 180.6 L233.8 180.6 L226.2 174.2 M213.7 168.2 L216.7 167.6 L220.5 168.0 L225.1 171.9 M213.7 168.2 L214.9 163.1 L217.9 161.1 M222.4 188.4 L222.4 197.3 L223.6 199.0 M209.2 197.7 L216.2 201.7 L219.0 204.7 M203.3 189.2 L209.2 187.8 L211.1 192.4 L209.2 195.4 L209.2 197.7 L202.5 197.7 L200.8 198.5 L202.5 191.4 L203.3 189.2 M209.2 187.8 L213.0 187.4 M200.8 198.5 L199.7 201.1 L200.4 204.3 L200.6 208.2 L203.1 211.6 L198.5 213.5 L199.1 219.9 L201.2 221.4 L196.3 217.9 L190.2 216.8 L190.2 220.7 M202.5 197.7 L203.1 200.4 L199.7 201.1 M203.1 200.4 L202.5 204.0 L200.4 204.3 M221.3 215.8 L215.8 218.1 L210.9 217.9 M203.1 211.6 L207.1 213.7 L210.9 217.9 M207.1 213.7 L207.6 222.6 L210.1 223.6 L211.6 228.1 L210.9 217.9 M192.7 230.1 L199.5 226.3 L202.3 225.8 L207.3 222.6 M202.3 225.8 L207.1 227.9 L207.1 233.5 L206.1 237.2 L204.0 239.4 M204.0 239.4 L200.4 239.0 L195.9 241.9 L193.0 246.3 L188.3 245.4 L182.6 244.4 L182.6 252.0 M182.6 244.4 L182.6 238.6 L184.5 238.6 L184.5 231.1 L189.3 230.5 L192.7 230.1 M192.7 230.1 L197.2 235.5 L200.4 239.0 M182.6 252.0 L177.9 252.9 L176.0 252.4 M167.1 229.1 L171.2 229.3 L179.8 229.3 L189.1 229.7 M190.2 220.7 L186.4 220.7 L186.4 226.9 L189.1 229.7 M168.0 207.2 L176.2 207.0 L176.9 209.7 L181.7 211.0 L186.0 209.7 L186.4 216.8 L190.2 216.8 M168.0 205.3 L171.2 204.3 L173.7 204.0 L175.4 200.0 L178.4 196.7 L180.0 189.2 M169.9 191.6 L172.2 196.7 L172.0 199.6 L167.1 202.4 L165.9 203.4 M206.9 248.6 L205.2 246.7 L204.0 239.4 M195.9 254.6 L198.7 252.7 L200.4 254.6 L197.8 256.8 L195.9 254.6 M139.6 186.1 L139.2 177.7 L139.4 174.8 M147.0 184.2 L145.6 179.6 L144.5 174.8 M149.8 183.6 L150.0 178.7 L151.5 173.5 M147.7 184.0 L147.5 178.7 L146.6 174.8 M134.3 176.0 L139.4 174.8 L144.5 174.8 L146.6 174.8 L149.1 172.3 L151.5 173.5 M130.5 187.4 L128.6 181.3 M128.6 181.3 L125.2 179.6 L122.9 182.5 M128.6 181.3 L129.5 176.4 L128.2 174.8 L123.1 172.1 L118.7 171.5 L116.2 174.8 M113.4 165.1 L118.1 163.9 L121.6 167.4 L123.1 172.1 M119.5 178.5 L125.2 179.6 M118.7 171.5 L113.0 172.1 M129.5 176.4 L134.3 176.0 M9.5 173.3 L7.2 176.7 L7.2 181.5 L11.9 182.5 L16.7 184.0 L16.1 190.5 L17.6 193.5 M17.6 193.5 L12.3 192.6 L13.1 197.7 L12.1 203.8 M12.1 203.8 L6.5 200.4 L1.9 196.0 L-2.3 194.3 L-5.1 193.0 M17.6 193.5 L20.5 194.3 L23.3 192.0 L23.3 188.2 L29.0 187.3 L29.6 185.9 M29.6 185.9 L28.3 184.4 L30.9 179.6 M29.6 185.9 L31.3 187.3 L31.9 192.4 L34.7 193.0 L37.5 192.0 L41.3 191.4 L44.8 191.4 L46.8 187.8 M36.2 184.4 L34.7 189.2 L37.5 192.0 M42.3 185.0 L41.3 191.4 M12.1 203.8 L6.3 205.3 L4.9 209.7 L6.8 213.9 L11.0 213.9 L10.8 216.8 L12.9 216.8 M1.9 196.0 L1.5 199.6 L-3.2 202.3 L-5.1 205.3 L-7.6 202.3 M12.9 216.8 L14.8 217.0 L20.9 214.5 L21.4 218.7 L30.0 222.0 L30.9 226.9 L34.1 227.1 L35.7 230.5 L34.7 234.5 M12.9 216.8 L13.8 225.0 L12.9 229.5 L11.4 231.3 M12.9 229.5 L14.8 233.5 L15.7 240.2 L17.6 240.6 M17.6 240.6 L22.4 239.0 L26.0 239.0 L27.1 234.5 L34.7 234.5 M34.7 234.5 L35.1 238.8 L39.1 239.2 L41.7 242.7 L41.2 246.0 M26.0 239.0 L33.6 249.4 L38.5 249.6 L41.2 246.0 M41.2 246.0 L42.7 249.4 L38.9 251.6 L35.5 255.9 L34.3 262.2 L33.9 264.4 M35.5 255.9 L39.4 257.2 L43.4 263.7 M17.6 240.6 L14.8 244.8 L12.3 255.5 L11.9 262.2 L11.0 269.1 M17.6 100.6 L16.1 94.6 L13.5 93.5 L10.6 99.0 L9.1 100.0 L3.0 100.0 L-0.4 102.2 L-5.1 104.0 M331.7 176.7 L332.8 173.3 L330.9 167.0 L331.7 164.1 L329.6 160.1 L334.3 156.5 L336.6 154.2 M334.3 156.5 L336.2 162.1 L338.1 161.1 L343.2 162.3 L344.7 168.0 M338.5 152.0 L341.9 156.3 L344.2 159.7 L348.2 165.1 L348.7 168.0 M339.8 173.5 L338.9 169.8 L344.7 168.0 L348.7 168.0 L345.5 173.5 L342.9 176.0 M334.5 183.6 L336.4 185.0 L338.3 184.0 M352.5 192.0 L354.2 194.1 L357.5 193.0 L361.8 193.1 L364.3 187.6 L367.7 187.8 M412.1 200.7 L412.1 213.1 M379.8 213.5 L381.7 213.3 L381.9 214.1 M380.6 112.9 L385.3 108.4 L388.0 107.9 L392.3 106.9 M383.8 118.3 L388.2 116.3 M133.5 73.0 L130.8 73.3 L129.1 72.0 L130.8 70.1"/>
</g>
<defs><filter id="bl" x="-5%" y="-5%" width="110%" height="110%"><feGaussianBlur stdDeviation="0.45"/></filter></defs>
<g>
<circle cx="13.0" cy="171.8" r="9.9" fill="#00e400" fill-opacity="0.8"/>
<circle cx="3.2" cy="186.2" r="9.9" fill="#00e400" fill-opacity="0.8"/>
<circle cx="-0.5" cy="218.0" r="9.9" fill="#ffff00" fill-opacity="0.8"/>
<circle cx="32.4" cy="263.6" r="9.9" fill="#00e400" fill-opacity="0.8"/>
<circle cx="149.2" cy="120.0" r="9.9" fill="#9a9a9a" fill-opacity="0.8"/>
<circle cx="117.8" cy="177.2" r="9.9" fill="#ffff00" fill-opacity="0.8"/>
<circle cx="128.8" cy="171.1" r="9.9" fill="#9a9a9a" fill-opacity="0.8"/>
<circle cx="147.5" cy="184.2" r="9.9" fill="#ffff00" fill-opacity="0.8"/>
<circle cx="138.4" cy="184.9" r="9.9" fill="#ff7e00" fill-opacity="0.8"/>
<circle cx="172.7" cy="172.5" r="9.9" fill="#ffff00" fill-opacity="0.8"/>
<circle cx="205.5" cy="165.4" r="9.9" fill="#00e400" fill-opacity="0.8"/>
<circle cx="217.8" cy="177.6" r="9.9" fill="#9a9a9a" fill-opacity="0.8"/>
<circle cx="217.8" cy="177.6" r="9.9" fill="#00e400" fill-opacity="0.8"/>
<circle cx="205.8" cy="194.3" r="9.9" fill="#9a9a9a" fill-opacity="0.8"/>
<circle cx="177.8" cy="102.6" r="9.9" fill="#ff0000" fill-opacity="0.8"/>
<circle cx="185.0" cy="106.0" r="9.9" fill="#ff0000" fill-opacity="0.8"/>
<circle cx="213.0" cy="130.8" r="9.9" fill="#9a9a9a" fill-opacity="0.8"/>
<circle cx="228.4" cy="127.5" r="9.9" fill="#ffff00" fill-opacity="0.8"/>
<circle cx="235.5" cy="137.0" r="9.9" fill="#ffff00" fill-opacity="0.8"/>
<circle cx="231.6" cy="146.3" r="9.9" fill="#9a9a9a" fill-opacity="0.8"/>
<circle cx="246.8" cy="148.6" r="9.9" fill="#ffff00" fill-opacity="0.8"/>
<circle cx="240.2" cy="144.4" r="9.9" fill="#ff7e00" fill-opacity="0.8"/>
<circle cx="252.2" cy="146.4" r="9.9" fill="#ff0000" fill-opacity="0.8"/>
<circle cx="218.6" cy="153.8" r="9.9" fill="#ffff00" fill-opacity="0.8"/>
<circle cx="254.8" cy="117.7" r="9.9" fill="#00e400" fill-opacity="0.8"/>
<circle cx="275.5" cy="85.2" r="9.9" fill="#00e400" fill-opacity="0.8"/>
<circle cx="275.5" cy="108.8" r="9.9" fill="#ffff00" fill-opacity="0.8"/>
<circle cx="274.9" cy="115.8" r="9.9" fill="#ff0000" fill-opacity="0.8"/>
<circle cx="288.4" cy="105.3" r="9.9" fill="#ff7e00" fill-opacity="0.8"/>
<circle cx="275.6" cy="126.6" r="9.9" fill="#ff7e00" fill-opacity="0.8"/>
<circle cx="281.4" cy="133.8" r="9.9" fill="#99004c" fill-opacity="0.8"/>
<circle cx="283.5" cy="126.6" r="9.9" fill="#ff0000" fill-opacity="0.8"/>
<circle cx="290.7" cy="138.8" r="9.9" fill="#ff0000" fill-opacity="0.8"/>
<circle cx="311.0" cy="153.2" r="9.9" fill="#9a9a9a" fill-opacity="0.8"/>
<circle cx="316.6" cy="148.8" r="9.9" fill="#ff0000" fill-opacity="0.8"/>
<circle cx="305.6" cy="140.0" r="9.9" fill="#ffff00" fill-opacity="0.8"/>
<circle cx="272.2" cy="147.0" r="9.9" fill="#ff0000" fill-opacity="0.8"/>
<circle cx="293.5" cy="161.8" r="9.9" fill="#ffff00" fill-opacity="0.8"/>
<circle cx="282.6" cy="158.9" r="9.9" fill="#ff7e00" fill-opacity="0.8"/>
<circle cx="296.6" cy="169.8" r="9.9" fill="#ffff00" fill-opacity="0.8"/>
<circle cx="295.8" cy="182.2" r="9.9" fill="#00e400" fill-opacity="0.8"/>
<circle cx="347.3" cy="91.9" r="9.9" fill="#ff0000" fill-opacity="0.8"/>
<circle cx="379.3" cy="108.7" r="9.9" fill="#ffff00" fill-opacity="0.8"/>
<circle cx="365.2" cy="112.9" r="9.9" fill="#ff0000" fill-opacity="0.8"/>
<circle cx="375.2" cy="133.4" r="9.9" fill="#00e400" fill-opacity="0.8"/>
<circle cx="359.2" cy="150.4" r="9.9" fill="#ffff00" fill-opacity="0.8"/>
<circle cx="346.9" cy="174.7" r="9.9" fill="#ffff00" fill-opacity="0.8"/>
<circle cx="339.2" cy="160.5" r="9.9" fill="#ff0000" fill-opacity="0.8"/>
<circle cx="326.8" cy="162.9" r="9.9" fill="#ff7e00" fill-opacity="0.8"/>
<circle cx="345.1" cy="153.9" r="9.9" fill="#ff0000" fill-opacity="0.8"/>
<circle cx="347.1" cy="207.3" r="9.9" fill="#ffff00" fill-opacity="0.8"/>
</g>
<g font-family="Liberation Sans,Arial,sans-serif" font-weight="bold" font-size="8.1" text-anchor="middle">
<text x="13.0" y="173.6" fill="#000" stroke="#fff" stroke-width="2.5" stroke-linejoin="round" paint-order="stroke">25</text>
<text x="3.2" y="188.0" fill="#000" stroke="#fff" stroke-width="2.5" stroke-linejoin="round" paint-order="stroke">49</text>
<text x="-0.5" y="219.8" fill="#000" stroke="#fff" stroke-width="2.5" stroke-linejoin="round" paint-order="stroke">57</text>
<text x="32.4" y="265.4" fill="#000" stroke="#fff" stroke-width="2.5" stroke-linejoin="round" paint-order="stroke">7</text>
<text x="149.2" y="121.8" fill="#000" stroke="#fff" stroke-width="2.5" stroke-linejoin="round" paint-order="stroke">N/A</text>
<text x="117.8" y="179.0" fill="#000" stroke="#fff" stroke-width="2.5" stroke-linejoin="round" paint-order="stroke">78</text>
<text x="128.8" y="172.9" fill="#000" stroke="#fff" stroke-width="2.5" stroke-linejoin="round" paint-order="stroke">N/A</text>
<text x="138.4" y="186.7" fill="#000" stroke="#fff" stroke-width="2.5" stroke-linejoin="round" paint-order="stroke">1059</text>
<text x="172.7" y="174.3" fill="#000" stroke="#fff" stroke-width="2.5" stroke-linejoin="round" paint-order="stroke">84</text>
<text x="205.5" y="167.2" fill="#000" stroke="#fff" stroke-width="2.5" stroke-linejoin="round" paint-order="stroke">33</text>
<text x="217.8" y="179.4" fill="#000" stroke="#fff" stroke-width="2.5" stroke-linejoin="round" paint-order="stroke">N/A</text>
<text x="217.8" y="179.4" fill="#000" stroke="#fff" stroke-width="2.5" stroke-linejoin="round" paint-order="stroke">47</text>
<text x="205.8" y="196.1" fill="#000" stroke="#fff" stroke-width="2.5" stroke-linejoin="round" paint-order="stroke">N/A</text>
<text x="177.8" y="104.4" fill="#000" stroke="#fff" stroke-width="2.5" stroke-linejoin="round" paint-order="stroke">176</text>
<text x="185.0" y="107.8" fill="#000" stroke="#fff" stroke-width="2.5" stroke-linejoin="round" paint-order="stroke">163</text>
<text x="213.0" y="132.6" fill="#000" stroke="#fff" stroke-width="2.5" stroke-linejoin="round" paint-order="stroke">N/A</text>
<text x="228.4" y="129.3" fill="#000" stroke="#fff" stroke-width="2.5" stroke-linejoin="round" paint-order="stroke">78</text>
<text x="235.5" y="138.8" fill="#000" stroke="#fff" stroke-width="2.5" stroke-linejoin="round" paint-order="stroke">95</text>
<text x="231.6" y="148.1" fill="#000" stroke="#fff" stroke-width="2.5" stroke-linejoin="round" paint-order="stroke">N/A</text>
<text x="246.8" y="150.4" fill="#000" stroke="#fff" stroke-width="2.5" stroke-linejoin="round" paint-order="stroke">99</text>
<text x="240.2" y="146.2" fill="#000" stroke="#fff" stroke-width="2.5" stroke-linejoin="round" paint-order="stroke">107</text>
<text x="252.2" y="148.2" fill="#000" stroke="#fff" stroke-width="2.5" stroke-linejoin="round" paint-order="stroke">62</text>
<text x="218.6" y="155.6" fill="#000" stroke="#fff" stroke-width="2.5" stroke-linejoin="round" paint-order="stroke">54</text>
<text x="254.8" y="119.5" fill="#000" stroke="#fff" stroke-width="2.5" stroke-linejoin="round" paint-order="stroke">18</text>
<text x="275.5" y="110.6" fill="#000" stroke="#fff" stroke-width="2.5" stroke-linejoin="round" paint-order="stroke">66</text>
<text x="274.9" y="117.6" fill="#000" stroke="#fff" stroke-width="2.5" stroke-linejoin="round" paint-order="stroke">166</text>
<text x="288.4" y="107.1" fill="#000" stroke="#fff" stroke-width="2.5" stroke-linejoin="round" paint-order="stroke">1138</text>
<text x="275.6" y="128.4" fill="#000" stroke="#fff" stroke-width="2.5" stroke-linejoin="round" paint-order="stroke">127</text>
<text x="285.6" y="135.2" fill="#000" stroke="#fff" stroke-width="2.5" stroke-linejoin="round" paint-order="stroke">268</text>
<text x="283.5" y="128.4" fill="#000" stroke="#fff" stroke-width="2.5" stroke-linejoin="round" paint-order="stroke">172</text>
<text x="290.7" y="140.6" fill="#000" stroke="#fff" stroke-width="2.5" stroke-linejoin="round" paint-order="stroke">165</text>
<text x="312.4" y="154.2" fill="#000" stroke="#fff" stroke-width="2.5" stroke-linejoin="round" paint-order="stroke">N/A</text>
<text x="316.6" y="150.6" fill="#000" stroke="#fff" stroke-width="2.5" stroke-linejoin="round" paint-order="stroke">151</text>
<text x="305.6" y="141.8" fill="#000" stroke="#fff" stroke-width="2.5" stroke-linejoin="round" paint-order="stroke">56</text>
<text x="272.2" y="148.8" fill="#000" stroke="#fff" stroke-width="2.5" stroke-linejoin="round" paint-order="stroke">185</text>
<text x="293.5" y="163.6" fill="#000" stroke="#fff" stroke-width="2.5" stroke-linejoin="round" paint-order="stroke">75</text>
<text x="282.6" y="160.7" fill="#000" stroke="#fff" stroke-width="2.5" stroke-linejoin="round" paint-order="stroke">116</text>
<text x="296.6" y="171.6" fill="#000" stroke="#fff" stroke-width="2.5" stroke-linejoin="round" paint-order="stroke">74</text>
<text x="295.8" y="184.0" fill="#000" stroke="#fff" stroke-width="2.5" stroke-linejoin="round" paint-order="stroke">32</text>
<text x="347.3" y="93.7" fill="#000" stroke="#fff" stroke-width="2.5" stroke-linejoin="round" paint-order="stroke">167</text>
<text x="379.3" y="110.5" fill="#000" stroke="#fff" stroke-width="2.5" stroke-linejoin="round" paint-order="stroke">88</text>
<text x="365.2" y="114.7" fill="#000" stroke="#fff" stroke-width="2.5" stroke-linejoin="round" paint-order="stroke">152</text>
<text x="375.2" y="135.2" fill="#000" stroke="#fff" stroke-width="2.5" stroke-linejoin="round" paint-order="stroke">43</text>
<text x="359.2" y="152.2" fill="#000" stroke="#fff" stroke-width="2.5" stroke-linejoin="round" paint-order="stroke">87</text>
<text x="346.9" y="176.5" fill="#000" stroke="#fff" stroke-width="2.5" stroke-linejoin="round" paint-order="stroke">78</text>
<text x="339.2" y="162.3" fill="#000" stroke="#fff" stroke-width="2.5" stroke-linejoin="round" paint-order="stroke">161</text>
<text x="326.8" y="164.7" fill="#000" stroke="#fff" stroke-width="2.5" stroke-linejoin="round" paint-order="stroke">105</text>
<text x="345.1" y="155.7" fill="#000" stroke="#fff" stroke-width="2.5" stroke-linejoin="round" paint-order="stroke">157</text>
<text x="347.1" y="209.1" fill="#000" stroke="#fff" stroke-width="2.5" stroke-linejoin="round" paint-order="stroke">56</text>
</g>
</svg>
<div id="pop"><div class="tipc"><div class="tip"></div></div><div class="pc">Bishkek<br>2020-11-13 7:00 PM<br>(LT)</div>
<table><tr><th style="width:55px">Pollutant</th><th>AQI</th></tr><tr><td>PM2.5</td><td class="r">153</td></tr></table></div>
</div>

<div class="abs ph" style="top:3px;line-height:22.4px">Select a City</div>
<div class="abs sel" style="top:27px">Bishkek<span class="x">×</span><span class="ar"></span></div>
<div class="abs ph" style="top:65.8px;line-height:24.6px">Select a Parameter</div>
<div class="abs sel" style="top:90px">PM2.5<span class="x">×</span><span class="ar"></span></div>
<div id="city" class="abs"><b>Bishkek</b>
<svg id="rss" viewBox="0 0 23 23"><rect width="23" height="23" fill="#f4b53f"/><circle cx="5.3" cy="17.7" r="2.3" fill="#fff"/><path d="M3 10.200 A9.800 9.800 0 0 1 12.800 20" fill="none" stroke="#fff" stroke-width="3"/><path d="M3 4.300 A15.700 15.700 0 0 1 18.700 20" fill="none" stroke="#fff" stroke-width="3"/></svg>
</div>
<div id="note" class="abs">Note: Values above 500 are considered Beyond the AQI. Follow<br>recommendations for the Hazardous category. Additional information<br>on reducing exposure to extremely high levels of particle pollution is<br>available <b>here</b>.</div>

<div id="t1" class="abs tab">AQI</div>
<div class="abs tab off" style="left:86px;width:110.500px">Concentration</div>
<div class="abs tab off" style="left:199.500px;width:91.500px">Historical</div>
<div id="tline" class="abs"></div>
<div id="learn" class="abs">Learn more about how the Air Quality Index [AQI] is calculated from the EPA <b>here</b>.</div>

<div id="chart" class="abs">
<svg width="535" height="211" viewBox="0 0 535 211" style="position:absolute;left:0;top:0;font-family:'DejaVu Sans','Liberation Sans',sans-serif">
<line x1="50.5" x2="527.50" y1="138.00" y2="138.00" stroke="#e6e6e6" stroke-width="1"/>
<line x1="50.5" x2="527.50" y1="113.75" y2="113.75" stroke="#e6e6e6" stroke-width="1"/>
<line x1="50.5" x2="527.50" y1="89.50" y2="89.50" stroke="#e6e6e6" stroke-width="1"/>
<line x1="50.5" x2="527.50" y1="65.25" y2="65.25" stroke="#e6e6e6" stroke-width="1"/>
<line x1="50.5" x2="527.50" y1="41.00" y2="41.00" stroke="#e6e6e6" stroke-width="1"/>
<text x="40.5" y="164.15" text-anchor="end" font-size="7.1" fill="#1a1a1a">0</text>
<text x="40.5" y="139.90" text-anchor="end" font-size="7.1" fill="#1a1a1a">100</text>
<text x="40.5" y="115.65" text-anchor="end" font-size="7.1" fill="#1a1a1a">200</text>
<text x="40.5" y="91.40" text-anchor="end" font-size="7.1" fill="#1a1a1a">300</text>
<text x="40.5" y="67.15" text-anchor="end" font-size="7.1" fill="#1a1a1a">400</text>
<text x="40.5" y="42.90" text-anchor="end" font-size="7.1" fill="#1a1a1a">500</text>
<line x1="50.5" x2="527.50" y1="162.25" y2="162.25" stroke="#c0d0e0" stroke-width="1"/>
<line x1="50.50" x2="50.50" y1="162.25" y2="169.25" stroke="#c0d0e0" stroke-width="1"/>
<line x1="70.38" x2="70.38" y1="162.25" y2="169.25" stroke="#c0d0e0" stroke-width="1"/>
<line x1="90.25" x2="90.25" y1="162.25" y2="169.25" stroke="#c0d0e0" stroke-width="1"/>
<line x1="110.12" x2="110.12" y1="162.25" y2="169.25" stroke="#c0d0e0" stroke-width="1"/>
<line x1="130.00" x2="130.00" y1="162.25" y2="169.25" stroke="#c0d0e0" stroke-width="1"/>
<line x1="149.88" x2="149.88" y1="162.25" y2="169.25" stroke="#c0d0e0" stroke-width="1"/>
<line x1="169.75" x2="169.75" y1="162.25" y2="169.25" stroke="#c0d0e0" stroke-width="1"/>
<line x1="189.62" x2="189.62" y1="162.25" y2="169.25" stroke="#c0d0e0" stroke-width="1"/>
<line x1="209.50" x2="209.50" y1="162.25" y2="169.25" stroke="#c0d0e0" stroke-width="1"/>
<line x1="229.38" x2="229.38" y1="162.25" y2="169.25" stroke="#c0d0e0" stroke-width="1"/>
<line x1="249.25" x2="249.25" y1="162.25" y2="169.25" stroke="#c0d0e0" stroke-width="1"/>
<line x1="269.12" x2="269.12" y1="162.25" y2="169.25" stroke="#c0d0e0" stroke-width="1"/>
<line x1="289.00" x2="289.00" y1="162.25" y2="169.25" stroke="#c0d0e0" stroke-width="1"/>
<line x1="308.88" x2="308.88" y1="162.25" y2="169.25" stroke="#c0d0e0" stroke-width="1"/>
<line x1="328.75" x2="328.75" y1="162.25" y2="169.25" stroke="#c0d0e0" stroke-width="1"/>
<line x1="348.62" x2="348.62" y1="162.25" y2="169.25" stroke="#c0d0e0" stroke-width="1"/>
<line x1="368.50" x2="368.50" y1="162.25" y2="169.25" stroke="#c0d0e0" stroke-width="1"/>
<line x1="388.38" x2="388.38" y1="162.25" y2="169.25" stroke="#c0d0e0" stroke-width="1"/>
<line x1="408.25" x2="408.25" y1="162.25" y2="169.25" stroke="#c0d0e0" stroke-width="1"/>
<line x1="428.12" x2="428.12" y1="162.25" y2="169.25" stroke="#c0d0e0" stroke-width="1"/>
<line x1="448.00" x2="448.00" y1="162.25" y2="169.25" stroke="#c0d0e0" stroke-width="1"/>
<line x1="467.88" x2="467.88" y1="162.25" y2="169.25" stroke="#c0d0e0" stroke-width="1"/>
<line x1="487.75" x2="487.75" y1="162.25" y2="169.25" stroke="#c0d0e0" stroke-width="1"/>
<line x1="507.62" x2="507.62" y1="162.25" y2="169.25" stroke="#c0d0e0" stroke-width="1"/>
<line x1="527.50" x2="527.50" y1="162.25" y2="169.25" stroke="#c0d0e0" stroke-width="1"/>
<rect x="55.44" y="146.49" width="10" height="15.76" fill="#ffff00" stroke="#4d4d33" stroke-width="1"/>
<rect x="75.31" y="146.49" width="10" height="15.76" fill="#ffff00" stroke="#4d4d33" stroke-width="1"/>
<rect x="95.19" y="144.31" width="10" height="17.95" fill="#ffff00" stroke="#4d4d33" stroke-width="1"/>
<rect x="115.06" y="147.46" width="10" height="14.79" fill="#ffff00" stroke="#4d4d33" stroke-width="1"/>
<rect x="134.94" y="147.46" width="10" height="14.79" fill="#ffff00" stroke="#4d4d33" stroke-width="1"/>
<rect x="154.81" y="150.61" width="10" height="11.64" fill="#00e400" stroke="#4d4d33" stroke-width="1"/>
<rect x="174.69" y="151.58" width="10" height="10.67" fill="#00e400" stroke="#4d4d33" stroke-width="1"/>
<rect x="194.56" y="153.28" width="10" height="8.97" fill="#00e400" stroke="#4d4d33" stroke-width="1"/>
<rect x="214.44" y="153.28" width="10" height="8.97" fill="#00e400" stroke="#4d4d33" stroke-width="1"/>
<rect x="234.31" y="155.22" width="10" height="7.03" fill="#00e400" stroke="#4d4d33" stroke-width="1"/>
<rect x="254.19" y="153.28" width="10" height="8.97" fill="#00e400" stroke="#4d4d33" stroke-width="1"/>
<rect x="274.06" y="153.03" width="10" height="9.21" fill="#00e400" stroke="#4d4d33" stroke-width="1"/>
<rect x="293.94" y="148.91" width="10" height="13.34" fill="#ffff00" stroke="#4d4d33" stroke-width="1"/>
<rect x="313.81" y="146.49" width="10" height="15.76" fill="#ffff00" stroke="#4d4d33" stroke-width="1"/>
<rect x="333.69" y="148.91" width="10" height="13.34" fill="#ffff00" stroke="#4d4d33" stroke-width="1"/>
<rect x="353.56" y="149.64" width="10" height="12.61" fill="#ffff00" stroke="#4d4d33" stroke-width="1"/>
<rect x="373.44" y="148.43" width="10" height="13.82" fill="#ffff00" stroke="#4d4d33" stroke-width="1"/>
<rect x="393.31" y="146.49" width="10" height="15.76" fill="#ffff00" stroke="#4d4d33" stroke-width="1"/>
<rect x="413.19" y="140.43" width="10" height="21.82" fill="#ffff00" stroke="#4d4d33" stroke-width="1"/>
<rect x="433.06" y="128.30" width="10" height="33.95" fill="#ff7e00" stroke="#4d4d33" stroke-width="1"/>
<rect x="452.94" y="124.18" width="10" height="38.07" fill="#ff0000" stroke="#4d4d33" stroke-width="1"/>
<rect x="472.81" y="124.18" width="10" height="38.07" fill="#ff0000" stroke="#4d4d33" stroke-width="1"/>
<rect x="492.69" y="124.66" width="10" height="37.59" fill="#ff0000" stroke="#4d4d33" stroke-width="1"/>
<rect x="512.56" y="125.15" width="10" height="37.10" fill="#ff0000" stroke="#4d4d33" stroke-width="1"/>
<text transform="translate(62.94,173.75) rotate(-45)" text-anchor="end" font-size="7.3" fill="#666">8 PM</text>
<text transform="translate(82.81,173.75) rotate(-45)" text-anchor="end" font-size="7.3" fill="#666">9 PM</text>
<text transform="translate(102.69,173.75) rotate(-45)" text-anchor="end" font-size="7.3" fill="#666">10 PM</text>
<text transform="translate(122.56,173.75) rotate(-45)" text-anchor="end" font-size="7.3" fill="#666">11 PM</text>
<text transform="translate(142.44,173.75) rotate(-45)" text-anchor="end" font-size="7.3" fill="#666">Nov 13, 2020 12 AM</text>
<text transform="translate(162.31,173.75) rotate(-45)" text-anchor="end" font-size="7.3" fill="#666">1 AM</text>
<text transform="translate(182.19,173.75) rotate(-45)" text-anchor="end" font-size="7.3" fill="#666">2 AM</text>
<text transform="translate(202.06,173.75) rotate(-45)" text-anchor="end" font-size="7.3" fill="#666">3 AM</text>
<text transform="translate(221.94,173.75) rotate(-45)" text-anchor="end" font-size="7.3" fill="#666">4 AM</text>
<text transform="translate(241.81,173.75) rotate(-45)" text-anchor="end" font-size="7.3" fill="#666">5 AM</text>
<text transform="translate(261.69,173.75) rotate(-45)" text-anchor="end" font-size="7.3" fill="#666">6 AM</text>
<text transform="translate(281.56,173.75) rotate(-45)" text-anchor="end" font-size="7.3" fill="#666">7 AM</text>
<text transform="translate(301.44,173.75) rotate(-45)" text-anchor="end" font-size="7.3" fill="#666">8 AM</text>
<text transform="translate(321.31,173.75) rotate(-45)" text-anchor="end" font-size="7.3" fill="#666">9 AM</text>
<text transform="translate(341.19,173.75) rotate(-45)" text-anchor="end" font-size="7.3" fill="#666">10 AM</text>
<text transform="translate(361.06,173.75) rotate(-45)" text-anchor="end" font-size="7.3" fill="#666">11 AM</text>
<text transform="translate(380.94,173.75) rotate(-45)" text-anchor="end" font-size="7.3" fill="#666">12 PM</text>
<text transform="translate(400.81,173.75) rotate(-45)" text-anchor="end" font-size="7.3" fill="#666">1 PM</text>
<text transform="translate(420.69,173.75) rotate(-45)" text-anchor="end" font-size="7.3" fill="#666">2 PM</text>
<text transform="translate(440.56,173.75) rotate(-45)" text-anchor="end" font-size="7.3" fill="#666">3 PM</text>
<text transform="translate(460.44,173.75) rotate(-45)" text-anchor="end" font-size="7.3" fill="#666">4 PM</text>
<text transform="translate(480.31,173.75) rotate(-45)" text-anchor="end" font-size="7.3" fill="#666">5 PM</text>
<text transform="translate(500.19,173.75) rotate(-45)" text-anchor="end" font-size="7.3" fill="#666">6 PM</text>
<text transform="translate(520.06,173.75) rotate(-45)" text-anchor="end" font-size="7.3" fill="#666">7 PM</text>
<text transform="translate(20.8,97.5) rotate(-90)" text-anchor="middle" font-size="7.3" fill="#222">AQI</text>
<text x="267" y="15.9" text-anchor="middle" font-size="11.6" fill="#333">Bishkek – PM2.5</text>
</svg>
</div>

<div id="cc" class="abs">
<div class="top"><div style="font-size:10px;line-height:13px;padding-top:4.500px">Current Conditions</div><div style="font-size:7.950px;line-height:14.500px">observed at</div><div style="font-size:10px;line-height:14px">Nov 13, 2020 7:00 PM (LT)</div></div>
<div class="red">153 AQI<br>Unhealthy<br>PM2.5</div>
<div class="hm">Health Message</div>
<div class="tx">Everyone may begin to experience health<br>effects when AQI values are between 151<br>and 200. Members of sensitive groups may<br>experience more serious health effects.</div>
</div>
</body>
</html>
